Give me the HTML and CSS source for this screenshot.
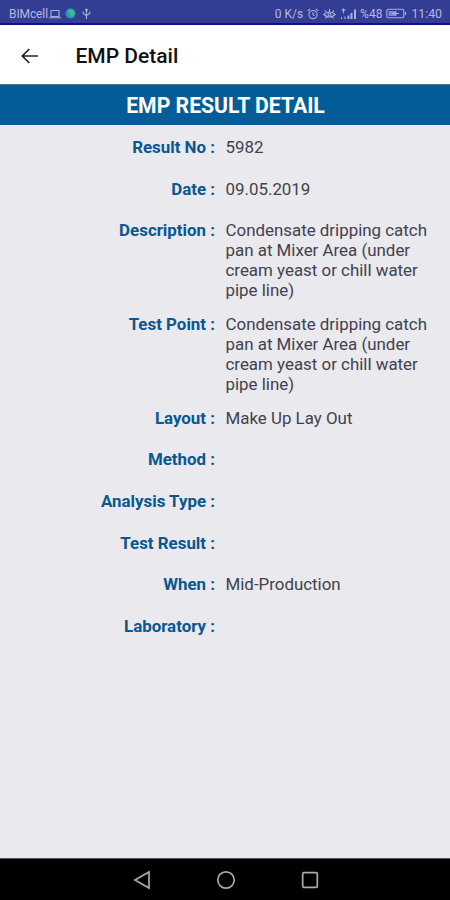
FILE: index.html
```html
<!DOCTYPE html>
<html lang="en">
<head>
<meta charset="utf-8">
<title>EMP Detail</title>
<link rel="stylesheet" href="styles.css">
</head>
<body>
<div class="screen">
  <div class="status">
    <span class="carrier">BIMcell</span>
    <svg class="s-laptop" width="12" height="10" viewBox="0 0 12 10"><path d="M2 1.5h8v6H2zM0 8.7h12"/></svg>
    <svg class="s-dot" width="11" height="11" viewBox="0 0 11 11"><circle cx="5.5" cy="5.5" r="5" fill="#2b9ab4"/><path d="M3 1.2L9 2.5 10 6 6.5 9 4.5 6z" fill="#36c08b"/></svg>
    <svg class="s-usb" width="9" height="12" viewBox="0 0 9 12"><path d="M4.5 1v10M1.2 3.5v2l3.3 2 3.3-2v-2M3.2 2.3L4.5 1l1.3 1.3"/></svg>
    <span class="spacer"></span>
    <span class="speed">0 K/s</span>
    <svg class="s-alarm" width="12" height="12" viewBox="0 0 12 12"><circle cx="6" cy="6.6" r="4.1"/><path d="M6 4.3v2.5l1.7 1M.8 3L3 .9M11.2 3L9 .9"/></svg>
    <svg class="s-eye" width="13" height="12" viewBox="0 0 13 12"><path d="M.8 6.5Q6.5 1.5 12.2 6.5 6.5 11.5.8 6.5zM6.5 4V1M3.5 4.5L2 2.2M9.5 4.5L11 2.2M3.5 8.5L2.5 10.5M9.5 8.5l1 2"/><circle cx="6.5" cy="6.5" r="1.5"/></svg>
    <svg class="s-signal" width="17" height="12" viewBox="0 0 17 12"><path d="M3.5 1v4.5M2 2.5L3.5 1 5 2.5M1.5 9v2M5 8.5V11"/><path d="M8.5 7.5V11M11.5 5v6M15 1.5V11" stroke-width="2"/></svg>
    <span class="percent">%48</span>
    <svg class="s-battery" width="21" height="11" viewBox="0 0 21 11"><rect x=".8" y="1.2" width="17" height="8.6" rx="1.5"/><path d="M19.5 4v3"/><path class="level" d="M2.5 3h8v5h-8z"/><path d="M6 5.5h7M9.5 3.5v4"/></svg>
    <span class="clock">11:40</span>
  </div>
  <header class="appbar">
    <svg class="back" width="18" height="16" viewBox="0 0 18 16"><path d="M17 8H1.5M8.3 1L1.3 8l7 7"/></svg>
    <h1 class="title">EMP Detail</h1>
  </header>
  <h2 class="banner">EMP RESULT DETAIL</h2>
  <main class="details">
    <div class="row"><span class="label">Result No :</span><span class="value">5982</span></div>
    <div class="row"><span class="label">Date :</span><span class="value">09.05.2019</span></div>
    <div class="row"><span class="label">Description :</span><span class="value">Condensate dripping catch<br>pan at Mixer Area (under<br>cream yeast or chill water<br>pipe line)</span></div>
    <div class="row"><span class="label">Test Point :</span><span class="value">Condensate dripping catch<br>pan at Mixer Area (under<br>cream yeast or chill water<br>pipe line)</span></div>
    <div class="row"><span class="label">Layout :</span><span class="value">Make Up Lay Out</span></div>
    <div class="row"><span class="label">Method :</span></div>
    <div class="row"><span class="label">Analysis Type :</span></div>
    <div class="row"><span class="label">Test Result :</span></div>
    <div class="row"><span class="label">When :</span><span class="value">Mid-Production</span></div>
    <div class="row"><span class="label">Laboratory :</span></div>
  </main>
  <nav class="navbar">
    <svg width="18" height="20" viewBox="0 0 18 20"><path d="M16 2v16L2 10z"/></svg>
    <svg width="20" height="20" viewBox="0 0 20 20"><circle cx="10" cy="10" r="8.2"/></svg>
    <svg width="18" height="18" viewBox="0 0 18 18"><rect x="1.7" y="1.7" width="14.6" height="14.6" rx="1"/></svg>
  </nav>
</div>
</body>
</html>
```
FILE: styles.css
```css
* { box-sizing: border-box; }
body { margin: 0; font-family: Roboto, sans-serif; }
svg { display: block; flex: none; fill: none; }
.screen { width: 450px; height: 900px; display: flex; flex-direction: column; background: #e9e9ee; overflow: hidden; }

.status { height: 25px; flex: none; display: flex; align-items: center; padding: 4px 8px 0 9px; background: #343d94; border-bottom: 2px solid #10108a; color: #b3b8e0; font-size: 12px; line-height: 14px; white-space: nowrap; }
.status svg { stroke: #a9afdb; stroke-width: 1.1; }
.status .s-dot { stroke: none; margin-left: 4px; }
.carrier { letter-spacing: -0.1px; }
.s-laptop { margin-left: 1px; }
.s-usb { margin-left: 6px; }
.spacer { flex: 1; }
.s-alarm { margin-left: 4px; }
.s-eye { margin-left: 4px; }
.s-signal { margin-left: 4px; }
.percent { margin-left: 3px; }
.s-battery { margin-left: 4px; }
.s-battery .level { fill: #7f87c4; stroke: none; }
.clock { margin-left: 4px; font-size: 12.3px; }

.appbar { height: 59px; flex: none; display: flex; align-items: center; padding: 2px 0 0 21px; background: #fff; }
.back { stroke: #222; stroke-width: 1.7; }
.title { margin: 0 0 0 36.5px; font-size: 21px; font-weight: 500; line-height: 26px; color: #111; }

.banner { height: 41px; flex: none; margin: 0; padding-left: 1px; background: #045c98; border-top: 1px solid #4a7890; color: #fff; font-size: 21.2px; font-weight: 700; line-height: 41px; text-align: center; }

.details { flex: 1; padding-top: 5.6px; }
.row { min-height: 41.6px; display: grid; grid-template-columns: 215px 1fr; column-gap: 10.5px; padding: 6.7px 0 7px; font-size: 16.9px; line-height: 20px; }
.label { text-align: right; font-weight: 700; color: #0b5790; }
.value { color: #42424e; white-space: nowrap; }

.navbar { height: 42px; flex: none; display: flex; justify-content: center; align-items: center; gap: 65px; padding-left: 1px; background: #000; border-top: 1px solid #555; }
.navbar svg { stroke: #aaa; stroke-width: 1.7; }
```
